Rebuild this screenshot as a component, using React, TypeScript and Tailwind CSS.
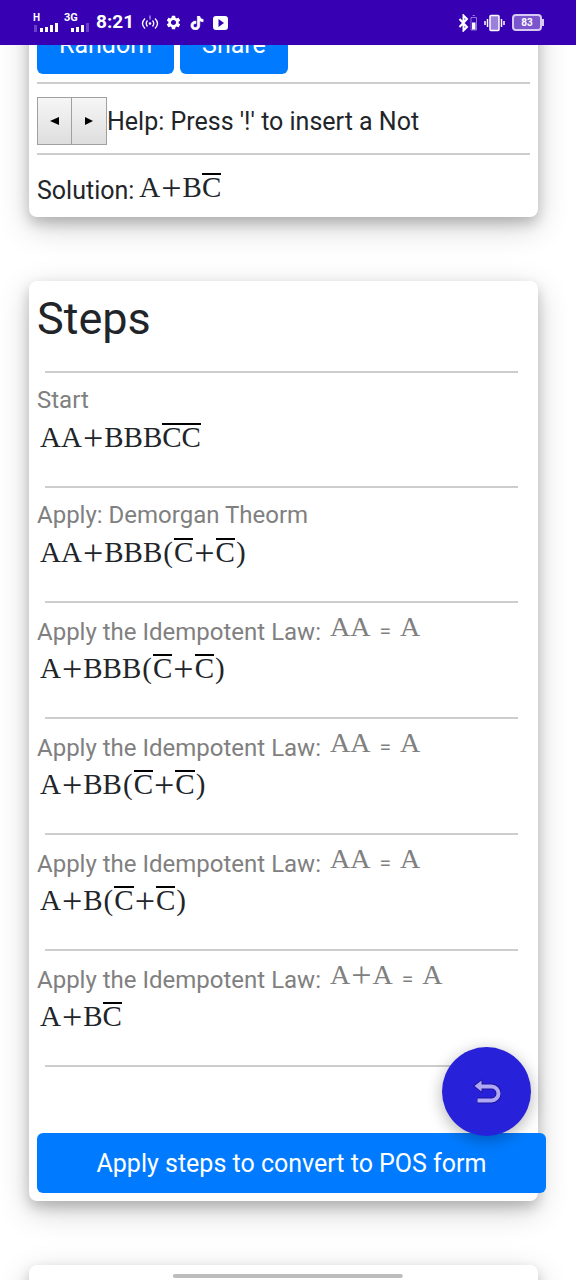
import { clsx } from 'clsx';
import { MdSettings } from 'react-icons/md';
import { FaTiktok } from 'react-icons/fa';

interface Step {
  label: string;
  law?: [string, string];
  result: string;
}

// ~X~ marks a negated term, drawn with a bar above it
const STEPS: Step[] = [
  { label: 'Start', result: 'AA+BBB~CC~' },
  { label: 'Apply: Demorgan Theorm', result: 'AA+BBB(~C~+~C~)' },
  { label: 'Apply the Idempotent Law:', law: ['AA', 'A'], result: 'A+BBB(~C~+~C~)' },
  { label: 'Apply the Idempotent Law:', law: ['AA', 'A'], result: 'A+BB(~C~+~C~)' },
  { label: 'Apply the Idempotent Law:', law: ['AA', 'A'], result: 'A+B(~C~+~C~)' },
  { label: 'Apply the Idempotent Law:', law: ['A+A', 'A'], result: 'A+B~C~' },
];

const CARD = 'ml-[29px] mr-[38px] rounded-lg bg-white p-2 shadow-[0_6px_13px_rgba(0,0,0,0.2),0_10px_32px_rgba(0,0,0,0.19)]';
const BUTTON = 'h-[60px] rounded-md bg-[#007bff] pt-0.5 text-[25px] text-white';
const ARROW_BUTTON = 'flex h-12 items-center justify-center border border-[#a0a0a0] bg-linear-to-b from-[#f6f6f6] to-[#dedede]';

function Formula({ text, className }: { text: string; className?: string }) {
  const parts = text.split(/(~[A-Z]+~|\+|\(|\))/).filter(Boolean);
  return (
    <span className={clsx('font-[Liberation_Serif,serif] leading-6', className)}>
      {parts.map((part, i) => {
        if (part[0] === '~') {
          return (
            <span key={i} className="inline-block border-t-2 border-black leading-6">
              {part.replaceAll('~', '')}
            </span>
          );
        }
        if (part === '+') return <span key={i} className="mx-px align-[-3px] text-[36px] leading-4">+</span>;
        if (part === '(' || part === ')') return <span key={i} className="mx-px">{part}</span>;
        return <span key={i}>{part}</span>;
      })}
    </span>
  );
}

function StepItem({ step }: { step: Step }) {
  return (
    <li>
      <hr className="ml-2 mr-3 border-t-2 border-[#cdcdcd]" />
      <div className={clsx('mt-3 whitespace-nowrap text-[24px] text-[#808080]', step.law ? 'h-[31px] leading-[26px]' : 'h-[30px] leading-[30px]')}>
        {step.label}
        {step.law && (
          <>
            <Formula text={step.law[0]} className="ml-[9px] align-[4px] text-[28px]" />
            <span className="mx-[9px] align-[2px] text-[21px] leading-5">=</span>
            <Formula text={step.law[1]} className="align-[4px] text-[28px]" />
          </>
        )}
      </div>
      <div className="h-[71px] whitespace-nowrap pl-[3px] pt-2 leading-9">
        <Formula text={step.result} className="text-[29px]" />
      </div>
    </li>
  );
}

function SignalIcon({ dimFirst }: { dimFirst?: boolean }) {
  return (
    <svg width="26" height="10" viewBox="0 0 26 10" fill="#fff">
      <rect x="1" y="2" width="3" height="7" opacity={dimFirst ? 0.25 : 0} />
      <rect x="7" y="5" width="3" height="4" />
      <rect x="12" y="4" width="3" height="5" />
      <rect x="17" y="2" width="3" height="7" />
      <rect x="22" y="0" width="3" height="9" opacity={dimFirst ? 1 : 0.25} />
    </svg>
  );
}

function StatusBar() {
  return (
    <header className="relative z-10 flex h-[45px] shrink-0 items-center bg-[#3700b3] pl-[33px] pr-8 text-white">
      <div className="flex w-[31px] flex-col">
        <span className="text-[10px] font-bold leading-[10px]">H</span>
        <SignalIcon dimFirst />
      </div>
      <div className="flex w-8 flex-col">
        <span className="text-[11px] font-bold leading-[10px]">3G</span>
        <SignalIcon />
      </div>
      <span className="text-[19px] font-bold">8:21</span>
      <svg className="ml-[7px]" width="18" height="18" viewBox="0 0 18 18" fill="none" stroke="#fff" strokeWidth="1.3">
        <path d="M4 4.500Q-1 9.500 4 14.500M6.500 6.500Q4 9.500 6.500 12.500M14 4.500Q19 9.500 14 14.500M11.500 6.500Q14 9.500 11.500 12.500" />
        <path d="M9 1.500v4" opacity=".6" />
        <circle cx="9" cy="9.500" r="1.300" fill="#fff" stroke="none" />
      </svg>
      <MdSettings className="ml-[6px]" size={17} />
      <FaTiktok className="ml-[8px]" size={14} stroke="#fff" strokeWidth="24" />
      <svg className="ml-[9px]" width="16" height="14" viewBox="0 0 16 14">
        <rect width="15" height="14" rx="3" fill="#fff" />
        <path d="M5.500 3v8l5.500-4z" fill="#3700b3" />
      </svg>

      <svg className="ml-auto" width="20" height="18" viewBox="0 0 20 18" fill="none" stroke="#fff">
        <path d="M1.500 5l7.500 8-3.500 3.500V1.500L9 5l-7.500 8" strokeWidth="2" />
        <path d="M13 3.500h5.500v12.500H13zM14.500 1.500h2.500" strokeWidth="1" opacity=".45" />
        <rect x="14" y="8.500" width="3.500" height="7" fill="#fff" stroke="none" />
      </svg>
      <svg className="ml-[6px]" width="21" height="18" viewBox="0 0 21 18" fill="none" stroke="#fff">
        <rect x="6" y="1.500" width="9" height="15" rx="1" strokeWidth="1.500" fill="#9b80d9" />
        <path d="M3.500 5v8M1 7v4M17.500 5v8M20 7v4" strokeWidth="1.500" />
      </svg>
      <div className="ml-[7px] flex items-center">
        <div className="flex h-[17px] w-[30px] items-center justify-center rounded-sm border-2 border-[#d8c8f4] bg-[#7a55cd] text-[10px] font-bold">
          83
        </div>
        <div className="h-[7px] w-0.5 bg-[#d8c8f4]" />
      </div>
    </header>
  );
}

export default function App() {
  return (
    <div className="relative flex h-screen flex-col overflow-hidden bg-white font-[Roboto,sans-serif] text-[#212529]">
      <StatusBar />

      <main className="min-h-0 flex-1 overflow-hidden">
        <section className={clsx(CARD, '-mt-[39px] h-[211px]')}>
          <div className="flex gap-[6px]">
            <button type="button" className={clsx(BUTTON, 'px-[22px]')}>Random</button>
            <button type="button" className={clsx(BUTTON, 'px-[22px]')}>Share</button>
          </div>
          <hr className="mt-2 border-t-2 border-[#cdcdcd]" />
          <div className="mt-[13px] flex items-center whitespace-nowrap text-[25px]">
            <button type="button" aria-label="Move left" className={clsx(ARROW_BUTTON, 'w-[35px]')}>
              <svg width="9" height="8" viewBox="0 0 9 8"><path d="M9 0v8L0 4z" /></svg>
            </button>
            <button type="button" aria-label="Move right" className={clsx(ARROW_BUTTON, '-ml-px w-9')}>
              <svg width="8" height="8" viewBox="0 0 8 8"><path d="M0 0v8l8-4z" /></svg>
            </button>
            <span className="pt-0.5">Help: Press '!' to insert a Not</span>
          </div>
          <hr className="mt-2 border-t-2 border-[#cdcdcd]" />
          <div className="mt-[18px] whitespace-nowrap text-[25px] leading-9">
            Solution:
            <Formula text="A+B~C~" className="ml-[5px] align-[2px] text-[29px]" />
          </div>
        </section>

        <section className={clsx(CARD, 'mt-16')}>
          <h2 className="h-[82px] text-[45px] leading-[60px]">Steps</h2>
          <ol>
            {STEPS.map((step, i) => <StepItem key={i} step={step} />)}
          </ol>
          <hr className="ml-2 mr-3 border-t-2 border-[#cdcdcd]" />
          <button type="button" className={clsx(BUTTON, 'mt-[66px] block w-[calc(100%+16px)]')}>
            Apply steps to convert to POS form
          </button>
        </section>

        <section className={clsx(CARD, 'mt-16 h-40')} />
      </main>

      <button
        type="button"
        aria-label="Undo"
        className="absolute bottom-36 right-[45px] flex size-[89px] items-center justify-center rounded-full bg-[#2821da] shadow-[0_4px_16px_rgba(0,0,0,0.3)]"
      >
        <svg width="28" height="26" viewBox="0 0 28 26" fill="none">
          <path d="M6 7.500H18.500a6.500 6.500 0 0 1 0 14H4" stroke="#1c149c" strokeWidth="6" />
          <path d="M0 7L9.500 0v14z" fill="#1c149c" />
          <path d="M6 7.500H18.500a6.500 6.500 0 0 1 0 14H4.500" stroke="#b0a8f4" strokeWidth="4" />
          <path d="M1.500 7L8.500 1.500v11z" fill="#b0a8f4" />
        </svg>
      </button>

      <div className="absolute bottom-0.5 left-1/2 h-1 w-2/5 -translate-x-1/2 rounded-full bg-[#bdbdbd]" />
    </div>
  );
}
